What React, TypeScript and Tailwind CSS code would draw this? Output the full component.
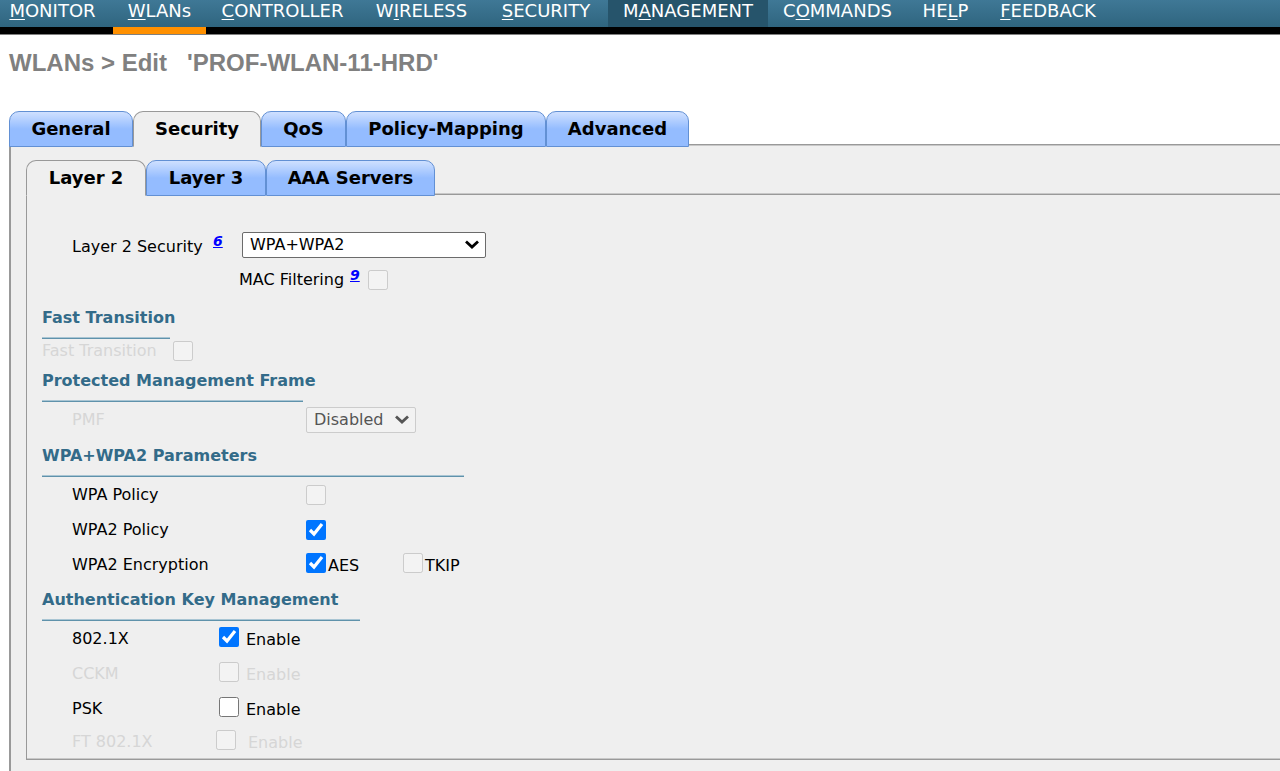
import React, { useState } from 'react';
import clsx from 'clsx';

const navItems = [
  { before: '', key: 'M', after: 'ONITOR', width: 'w-[113px] pr-2' },
  { before: '', key: 'W', after: 'LANs', width: 'w-[93px]', current: true },
  { before: '', key: 'C', after: 'ONTROLLER', width: 'w-[153px]' },
  { before: 'W', key: 'I', after: 'RELESS', width: 'w-[125px]' },
  { before: '', key: 'S', after: 'ECURITY', width: 'w-[124px]' },
  { before: 'M', key: 'A', after: 'NAGEMENT', width: 'w-[160px]', hovered: true },
  { before: 'C', key: 'O', after: 'MMANDS', width: 'w-[139px]' },
  { before: 'HE', key: 'L', after: 'P', width: 'w-[77px]' },
  { before: '', key: 'F', after: 'EEDBACK', width: 'w-[128px]' },
];

const mainTabs = [
  { label: 'General', width: 'w-[124px]' },
  { label: 'Security', width: 'w-[128px]' },
  { label: 'QoS', width: 'w-[85px]' },
  { label: 'Policy-Mapping', width: 'w-[200px]' },
  { label: 'Advanced', width: 'w-[143px]' },
];

const layerTabs = [
  { label: 'Layer 2', width: 'w-[120px]' },
  { label: 'Layer 3', width: 'w-[120px]' },
  { label: 'AAA Servers', width: 'w-[169px]' },
];

interface TabsProps {
  tabs: { label: string; width: string }[];
  active: string;
  onChange: (label: string) => void;
}

const Tabs: React.FC<TabsProps> = ({ tabs, active, onChange }) => (
  <div role="tablist" className="relative z-10 -mb-[3px] flex">
    {tabs.map((tab) => (
      <button
        key={tab.label}
        role="tab"
        type="button"
        aria-selected={tab.label === active}
        onClick={() => onChange(tab.label)}
        className={clsx(
          'h-9 shrink-0 rounded-t-[10px] border text-lg leading-[34px] font-bold whitespace-nowrap',
          tab.width,
          tab.label === active
            ? 'border-[#999999] border-b-[#efefef] bg-[#efefef]'
            : 'border-[#6290d4] bg-linear-to-b from-[#cfe0ff] to-[#94bcff] to-50%'
        )}
      >
        {tab.label}
      </button>
    ))}
  </div>
);

const Checkbox: React.FC<React.ComponentProps<'input'>> = ({ className, ...props }) => (
  <input type="checkbox" className={clsx('size-5 shrink-0', className)} {...props} />
);

const Chevron: React.FC = () => (
  <svg
    viewBox="0 0 16 10"
    className="pointer-events-none absolute top-1/2 right-1.5 h-[10px] w-4 -translate-y-1/2"
    fill="none"
    stroke="currentColor"
    strokeWidth="2.8"
  >
    <path d="M2 1.5 L8 7 L14 1.5" />
  </svg>
);

const SectionTitle: React.FC<{ className: string; children: React.ReactNode }> = ({ className, children }) => (
  <h2
    className={clsx(
      'mt-1.5 border-b border-[#5f92ab] pb-2 leading-6 font-bold whitespace-nowrap text-[#336b89] shadow-[inset_0_-1px_0_#a9c5d3]',
      className
    )}
  >
    {children}
  </h2>
);

const Footnote: React.FC<{ number: number }> = ({ number }) => (
  <a href={`#note-${number}`} className="mb-2 text-sm leading-[17px] font-bold text-[#0000ff] italic underline">
    {number}
  </a>
);

const PolicyRow: React.FC<{ label: string; htmlFor: string; disabled?: boolean; children: React.ReactNode }> = ({
  label,
  htmlFor,
  disabled,
  children,
}) => (
  <div className="flex h-[35px] items-center pl-[30px]">
    <label htmlFor={htmlFor} className={clsx('w-[234px]', disabled && 'text-[#d6d6d6]')}>
      {label}
    </label>
    {children}
  </div>
);

interface KeyRowProps {
  id: string;
  label: string;
  disabled?: boolean;
  defaultChecked?: boolean;
  last?: boolean;
}

const KeyRow: React.FC<KeyRowProps> = ({ id, label, disabled, defaultChecked, last }) => (
  <div className={clsx('flex items-center pl-[30px]', last ? 'h-8' : 'h-[35px]', disabled && 'text-[#d6d6d6]')}>
    <span className={last ? 'w-36' : 'w-[147px]'}>{label}</span>
    <Checkbox id={id} disabled={disabled} defaultChecked={defaultChecked} className="mb-1" />
    <label htmlFor={id} className={clsx('pt-0.5', last ? 'pl-3' : 'pl-[7px]')}>
      Enable
    </label>
  </div>
);

const App: React.FC = () => {
  const [mainTab, setMainTab] = useState('Security');
  const [layerTab, setLayerTab] = useState('Layer 2');

  return (
    <div className="flex min-h-screen flex-col bg-white font-['DejaVu_Sans',sans-serif] text-base text-black">
      <header className="border-b border-[#808080] bg-black">
        <nav className="flex h-[34px] bg-linear-to-b from-[#3f7896] to-[#2f657f] bg-[length:100%_27px] bg-no-repeat text-lg text-white">
          {navItems.map((item) => (
            <a
              key={item.key + item.after}
              href="#"
              className={clsx(
                'h-full shrink-0 text-center leading-[21px]',
                item.width,
                item.current && 'border-b-[7px] border-[#ff9000]',
                item.hovered && 'border-b-[7px] border-black bg-[#26546b]'
              )}
            >
              {item.before}
              <span className="underline underline-offset-2">{item.key}</span>
              {item.after}
            </a>
          ))}
        </nav>
      </header>

      <h1 className="flex gap-5 px-[9px] pt-3 font-['Liberation_Sans',sans-serif] text-2xl font-bold text-[#808080]">
        <span>WLANs &gt; Edit</span>
        <span>'PROF-WLAN-11-HRD'</span>
      </h1>

      <main className="flex grow flex-col pt-8 pl-[9px]">
        <Tabs tabs={mainTabs} active={mainTab} onChange={setMainTab} />
        <div className="grow border-t border-l-2 border-[#999999] bg-[#efefef] pt-[15px] pb-3 pl-[15px] shadow-[inset_0_1px_0_#c8c8c8]">
          <Tabs tabs={layerTabs} active={layerTab} onChange={setLayerTab} />
          <form className="mt-px border-y border-l border-[#999999] pb-px pl-[15px] shadow-[0_-1px_0_#c8c8c8,inset_0_-1px_0_#c8c8c8]">
            <div className="flex items-center pt-9 pl-[30px]">
              <label htmlFor="l2-security" className="w-[141px] pt-1">
                Layer 2 Security
              </label>
              <span className="flex w-[29px]">
                <Footnote number={6} />
              </span>
              <div className="relative">
                <select
                  id="l2-security"
                  className="h-[26px] w-[244px] appearance-none rounded-[2px] border border-[#6b6b6b] bg-white pl-[7px]"
                >
                  <option>WPA+WPA2</option>
                  <option>None</option>
                </select>
                <Chevron />
              </div>
            </div>
            <div className="flex h-[41px] items-center pl-[197px]">
              <label htmlFor="mac-filtering" className="w-[111px]">
                MAC Filtering
              </label>
              <Footnote number={9} />
              <Checkbox id="mac-filtering" disabled className="ml-2" />
            </div>

            <SectionTitle className="w-32">Fast Transition</SectionTitle>
            <div className="flex h-6 items-center text-[#d6d6d6]">
              <label htmlFor="fast-transition" className="w-[131px]">
                Fast Transition
              </label>
              <Checkbox id="fast-transition" disabled />
            </div>

            <SectionTitle className="w-[261px]">Protected Management Frame</SectionTitle>
            <PolicyRow label="PMF" htmlFor="pmf" disabled>
              <div className="relative text-[#555555]">
                <select
                  id="pmf"
                  disabled
                  className="h-[26px] w-[110px] appearance-none rounded-[2px] border border-[#cccccc] bg-[#f2f2f2] pl-[7px] opacity-100"
                >
                  <option>Disabled</option>
                  <option>Optional</option>
                  <option>Required</option>
                </select>
                <Chevron />
              </div>
            </PolicyRow>

            <div className="pt-px">
              <SectionTitle className="w-[422px]">WPA+WPA2 Parameters</SectionTitle>
            </div>
            <PolicyRow label="WPA Policy" htmlFor="wpa-policy">
              <Checkbox id="wpa-policy" disabled />
            </PolicyRow>
            <PolicyRow label="WPA2 Policy" htmlFor="wpa2-policy">
              <Checkbox id="wpa2-policy" defaultChecked />
            </PolicyRow>
            <PolicyRow label="WPA2 Encryption" htmlFor="aes">
              <Checkbox id="aes" defaultChecked className="mb-1" />
              <label htmlFor="aes" className="w-[77px] pt-0.5 pl-0.5">
                AES
              </label>
              <Checkbox id="tkip" disabled className="mb-1" />
              <label htmlFor="tkip" className="pt-0.5 pl-0.5">
                TKIP
              </label>
            </PolicyRow>

            <SectionTitle className="w-[318px]">Authentication Key Management</SectionTitle>
            <KeyRow id="dot1x" label="802.1X" defaultChecked />
            <KeyRow id="cckm" label="CCKM" disabled />
            <KeyRow id="psk" label="PSK" />
            <KeyRow id="ft-dot1x" label="FT 802.1X" disabled last />
          </form>
        </div>
      </main>
    </div>
  );
};

export default App;
